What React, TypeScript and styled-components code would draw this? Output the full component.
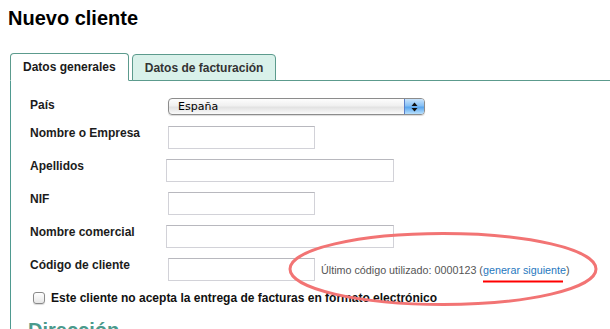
import React from 'react';
import styled, { createGlobalStyle } from 'styled-components';

type Field = {
  label: string;
  wide?: boolean;
  info?: boolean;
};

const fields: Field[] = [
  { label: 'Nombre o Empresa' },
  { label: 'Apellidos', wide: true },
  { label: 'NIF' },
  { label: 'Nombre comercial', wide: true },
  { label: 'Código de cliente', info: true }
];

function App() {
  return (
    <Page>
      <GlobalStyle />
      <Title>Nuevo cliente</Title>
      <Tabs>
        <TabList>
          <Tab $active>Datos generales</Tab>
          <Tab>Datos de facturación</Tab>
        </TabList>
        <Panel>
          <SelectRow>
            <Label>País</Label>
            <Select>
              <SelectText>España</SelectText>
              <Stepper>
                <svg width="7" height="10" viewBox="0 0 7 10">
                  <path d="M3.5 0.5 L6.5 4 L0.5 4 Z" fill="#111" />
                  <path d="M3.5 9.5 L6.5 6 L0.5 6 Z" fill="#111" />
                </svg>
              </Stepper>
            </Select>
          </SelectRow>
          {fields.map((f) => (
            <Row key={f.label}>
              <Label>{f.label}</Label>
              <Input type="text" $wide={f.wide} />
              {f.info && (
                <Info>
                  Último código utilizado: 0000123 (<Link href="#">generar siguiente</Link>)
                </Info>
              )}
            </Row>
          ))}
          <CheckRow>
            <Check />
            <CheckText>Este cliente no acepta la entrega de facturas en formato electrónico</CheckText>
          </CheckRow>
          <Section>Dirección</Section>
        </Panel>
      </Tabs>
      <Annotation width="610" height="329" viewBox="0 0 610 329">
        <ellipse cx="443" cy="269" rx="153" ry="35.5" fill="none" stroke="#f27474" strokeWidth="3" />
        <line x1="483" y1="281.5" x2="563" y2="281.5" stroke="#f00" strokeWidth="2" />
      </Annotation>
    </Page>
  );
}

const GlobalStyle = createGlobalStyle`
  html, body {
    margin: 0;
    background: #fff;
  }
  body {
    font-family: "Liberation Sans", Arial, Helvetica, sans-serif;
    color: #111;
  }
`;

const Page = styled.div`
  position: relative;
  width: 610px;
  height: 329px;
  overflow: hidden;
  padding: 6px 0 0 8px;
  box-sizing: border-box;
`;

const Title = styled.h1`
  margin: 0;
  font-size: 20px;
  line-height: 24px;
  font-weight: bold;
  color: #000;
`;

const Tabs = styled.div`
  margin: 23px 0 0 2px;
`;

const TabList = styled.div`
  display: flex;
  gap: 3px;
  align-items: flex-end;
`;

const Tab = styled.div<{ $active?: boolean }>`
  height: ${(p) => (p.$active ? 28 : 27)}px;
  box-sizing: border-box;
  padding: 0 12px;
  display: flex;
  align-items: center;
  font-size: 12px;
  font-weight: bold;
  color: ${(p) => (p.$active ? '#1a1a1a' : '#333')};
  background: ${(p) => (p.$active ? '#fff' : '#d9f1ea')};
  border: 1px solid #5c9b8d;
  border-bottom: ${(p) => (p.$active ? '1px solid #fff' : '1px solid #5c9b8d')};
  border-radius: 4px 4px 0 0;
  margin-bottom: -1px;
  position: relative;
  z-index: ${(p) => (p.$active ? 1 : 0)};
`;

const Panel = styled.div`
  border-top: 1px solid #5c9b8d;
  border-left: 1px solid #4f9a90;
  padding: 17px 0 40px 19px;
`;

const SelectRow = styled.div`
  display: flex;
  align-items: flex-start;
  margin-bottom: 11px;
`;

const Row = styled.div`
  display: flex;
  align-items: flex-start;
  margin-bottom: 10px;
`;

const Label = styled.div`
  width: 138px;
  flex: none;
  font-size: 12px;
  line-height: 15px;
  font-weight: bold;
  color: #1c1c1c;
`;

const Select = styled.div`
  width: 257px;
  height: 17px;
  box-sizing: border-box;
  display: flex;
  border: 1px solid #8c8c8c;
  border-radius: 4px;
  background: linear-gradient(#fdfdfd, #f0f0f0 45%, #e2e2e2 55%, #fafafa);
  box-shadow: 0 1px 1px rgba(0, 0, 0, 0.15);
  overflow: hidden;
`;

const SelectText = styled.span`
  flex: 1;
  padding-left: 9px;
  font-family: "DejaVu Sans", "Liberation Sans", sans-serif;
  font-size: 11px;
  line-height: 15px;
  color: #000;
`;

const Stepper = styled.span`
  width: 19px;
  display: flex;
  align-items: center;
  justify-content: center;
  border-left: 1px solid #5a7fc8;
  background: linear-gradient(#c9e4fc, #86c0f5 45%, #5aa6ee 55%, #b8e0fd);
`;

const Input = styled.input<{ $wide?: boolean }>`
  width: ${(p) => (p.$wide ? 228 : 147)}px;
  height: 23px;
  box-sizing: border-box;
  margin: 0 0 0 ${(p) => (p.$wide ? -2 : 0)}px;
  padding: 2px 4px;
  border: 1px solid #d2d2d8;
  border-top-color: #b8b8be;
  background: #fff;
  font: 12px "Liberation Sans", Arial, sans-serif;
`;

const Info = styled.span`
  margin-left: 6px;
  align-self: center;
  font-size: 10.75px;
  color: #555;
`;

const Link = styled.a`
  color: #1f78be;
  text-decoration: none;
`;

const CheckRow = styled.label`
  display: flex;
  align-items: center;
  gap: 6px;
  margin: 10px 0 0 3px;
`;

const Check = styled.span`
  width: 12px;
  height: 12px;
  box-sizing: border-box;
  border: 1px solid #8a8a8a;
  border-radius: 3px;
  background: linear-gradient(#fff, #e6e6e6);
  box-shadow: 0 1px 1px rgba(0, 0, 0, 0.15);
`;

const CheckText = styled.span`
  font-size: 12px;
  line-height: 14px;
  font-weight: bold;
  color: #111;
`;

const Section = styled.h2`
  margin: 13px 0 0 -2px;
  font-size: 20px;
  line-height: 24px;
  font-weight: bold;
  color: #4a9a8c;
`;

const Annotation = styled.svg`
  position: absolute;
  left: 0;
  top: 0;
  pointer-events: none;
`;

export default App;
